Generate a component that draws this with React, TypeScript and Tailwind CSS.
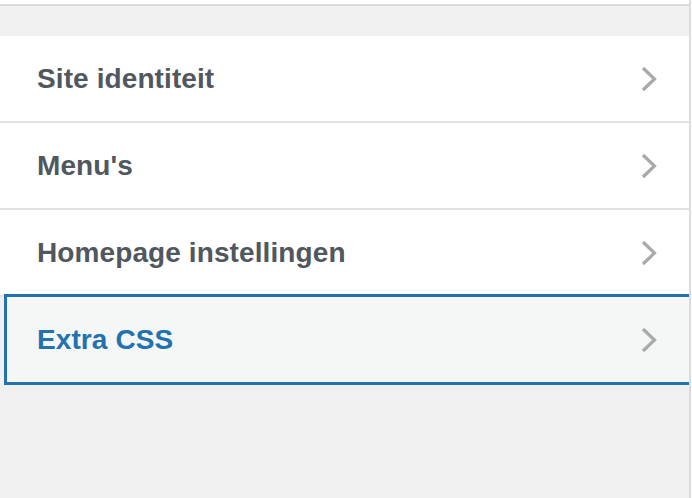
const items = [
  { label: 'Site identiteit', active: false },
  { label: "Menu's", active: false },
  { label: 'Homepage instellingen', active: false },
  { label: 'Extra CSS', active: true },
];

function Chevron() {
  return (
    <svg width="18" height="26" viewBox="0 0 18 26" className="shrink-0">
      <polyline
        points="2,2 13.5,13 2,24"
        fill="none"
        stroke="#a7aaad"
        strokeWidth="3.2"
        strokeLinecap="butt"
        strokeLinejoin="miter"
      />
    </svg>
  );
}

export default function App() {
  return (
    <div className="w-[692px] h-[498px] flex bg-white font-['Liberation_Sans',Arial,sans-serif] overflow-hidden">
      <div className="w-[689px] flex flex-col bg-[#f0f0f0]">
        {/* top strip */}
        <div className="h-[4px] bg-white"></div>
        <div className="h-[2px] bg-[#dcdcde]"></div>
        <div className="h-[30px]"></div>

        {/* panel list */}
        <ul className="flex flex-col">
          {items.map((item) =>
            item.active ? (
              <li
                key={item.label}
                className="relative -mt-[3px] ml-[4px] h-[91px] flex items-center justify-between pl-[30px] pr-[30px] bg-[#f5f6f6] border-t-[3px] border-b-[3px] border-l-[3px] border-[#2271b1]"
              >
                <span className="text-[28px] font-bold text-[#2271b1] tracking-[0.1px]">{item.label}</span>
                <Chevron />
              </li>
            ) : (
              <li
                key={item.label}
                className="h-[87px] flex items-center justify-between pl-[37px] pr-[30px] bg-white border-b-2 border-[#e2e2e4]"
              >
                <span className="text-[28px] font-bold text-[#50575e] tracking-[0.1px]">{item.label}</span>
                <Chevron />
              </li>
            )
          )}
        </ul>
      </div>
      <div className="w-[2px] bg-[#dcdcde]"></div>
      <div className="flex-1 bg-white"></div>
    </div>
  );
}
